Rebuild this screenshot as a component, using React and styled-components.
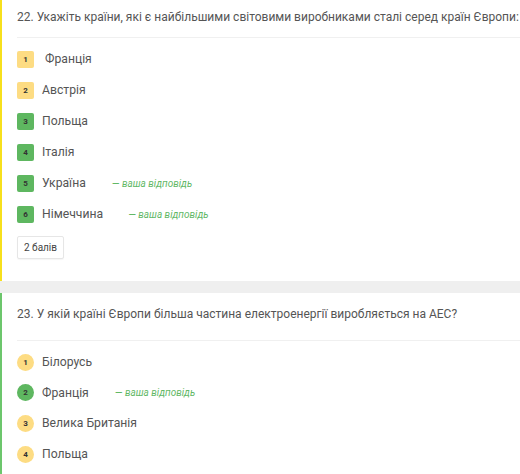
import React from "react";
import styled, { createGlobalStyle } from "styled-components";

const Global = createGlobalStyle`
  html, body { margin: 0; padding: 0; background: #fff; }
  body { font-family: Roboto, "Liberation Sans", Arial, sans-serif; color: #555; }
`;

const Page = styled.div`
  display: flex;
  flex-direction: column;
  gap: 12px;
  background: #efefef;
  width: 520px;
  overflow: hidden;
`;

const Card = styled.section`
  background: #fff;
  border-left: 2px solid ${(p) => p.$accent};
  padding: ${(p) => p.$top}px 0 ${(p) => p.$bottom}px 15px;
`;

const Question = styled.div`
  font-size: 12px;
  line-height: 16px;
  color: #555;
  padding-bottom: ${(p) => p.$gap}px;
  border-bottom: 1px solid #f0f0f0;
  white-space: nowrap;
`;

const Options = styled.ul`
  list-style: none;
  margin: 0;
  padding: 12px 0 0;
  display: flex;
  flex-direction: column;
  gap: ${(p) => p.$gap}px;
`;

const Option = styled.li`
  display: flex;
  align-items: center;
  height: 18px;
  font-size: 12.2px;
  color: #555;
`;

const Badge = styled.span`
  width: 17px;
  height: 17px;
  flex: none;
  display: flex;
  align-items: center;
  justify-content: center;
  font-size: 8px;
  font-weight: bold;
  color: #333;
  border-radius: ${(p) => (p.$round ? "50%" : "2px")};
  background: ${(p) => (p.$tone === "green" ? "#5eb760" : "#fddc83")};
  margin-right: 8px;
`;

const Note = styled.span`
  font-size: 10px;
  font-style: italic;
  color: #62b866;
  margin-left: ${(p) => p.$gap}px;
`;

const Score = styled.div`
  display: inline-block;
  margin-top: 13px;
  padding: 5px 6px;
  border: 1px solid #e6e6e6;
  border-radius: 2px;
  font-size: 10px;
  color: #444;
  box-shadow: 0 1px 1px rgba(0,0,0,0.04);
`;

const q1 = [
  { t: "\u00a0Франція", tone: "yellow" },
  { t: "Австрія", tone: "yellow" },
  { t: "Польща", tone: "green" },
  { t: "Італія", tone: "green" },
  { t: "Україна", tone: "green", note: 26 },
  { t: "Німеччина", tone: "green", note: 25 },
];

const q2 = [
  { t: "Білорусь", tone: "yellow" },
  { t: "Франція", tone: "green", note: 26 },
  { t: "Велика Британія", tone: "yellow" },
  { t: "Польща", tone: "yellow" },
];

export default function App() {
  return (
    <>
      <Global />
      <Page>
        <Card $accent="#f7e01c" $top={9} $bottom={22}>
          <Question $gap={12}>22. Укажіть країни, які є найбільшими світовими виробниками сталі серед країн Європи:</Question>
          <Options $gap={13}>
            {q1.map((o, i) => (
              <Option key={i}>
                <Badge $tone={o.tone}>{i + 1}</Badge>
                {o.t}
                {o.note && <Note $gap={o.note}>— ваша відповідь</Note>}
              </Option>
            ))}
          </Options>
          <Score>2 балів</Score>
        </Card>
        <Card $accent="#6cc66c" $top={13} $bottom={20}>
          <Question $gap={18}>23. У якій країні Європи більша частина електроенергії виробляється на АЕС?</Question>
          <Options $gap={12.7}>
            {q2.map((o, i) => (
              <Option key={i}>
                <Badge $round $tone={o.tone}>{i + 1}</Badge>
                {o.t}
                {o.note && <Note $gap={o.note}>— ваша відповідь</Note>}
              </Option>
            ))}
          </Options>
        </Card>
      </Page>
    </>
  );
}
